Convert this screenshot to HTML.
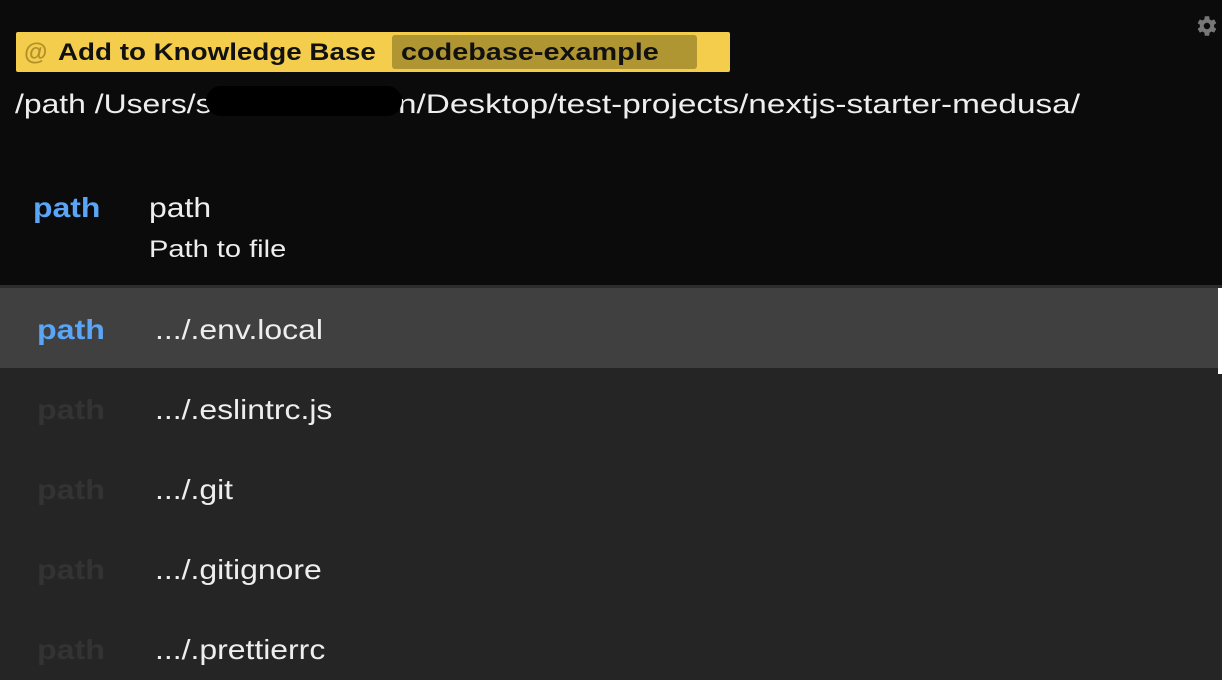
<!DOCTYPE html>
<html><head><style>
body{margin:0;width:1222px;height:680px;background:#0b0b0b;overflow:hidden;position:relative;font-family:"Liberation Sans",sans-serif;}
.a{position:absolute;white-space:nowrap;transform-origin:0 50%;}
.row{position:absolute;left:0;width:1222px;height:80px;background:#252525;}
.row .l{position:absolute;left:37px;top:26px;font-size:28px;font-weight:bold;color:#333;transform:scaleX(1.15);transform-origin:0 50%;}
.row .t{position:absolute;left:155px;top:26px;font-size:28px;color:#eee;transform:scaleX(1.14);transform-origin:0 50%;white-space:nowrap;}
</style></head><body>
<svg class="a" style="left:1193px;top:13px" width="26" height="26" viewBox="0 0 24 24"><path fill="#777" d="M19.4 13a7.5 7.5 0 0 0 0-2l2.1-1.6-2-3.5-2.5 1a7.5 7.5 0 0 0-1.7-1L14.9 3h-4l-.4 2.9a7.5 7.5 0 0 0-1.7 1l-2.5-1-2 3.5L6.4 11a7.5 7.5 0 0 0 0 2l-2.1 1.6 2 3.5 2.5-1a7.5 7.5 0 0 0 1.7 1l.4 2.9h4l.4-2.9a7.5 7.5 0 0 0 1.7-1l2.5 1 2-3.5zM12.9 15a3 3 0 1 1 0-6 3 3 0 0 1 0 6z"/></svg>
<div class="a" style="left:16px;top:32px;width:714px;height:40px;background:#f3cd4b;border-radius:2px"></div>
<div class="a" style="left:392px;top:35px;width:305px;height:34px;background:#b09632;border-radius:3px"></div>
<div class="a" style="left:24px;top:39px;font-size:24px;font-weight:bold;color:#b28f2a">@</div>
<div class="a" style="left:58px;top:39px;font-size:24px;font-weight:bold;color:#111;transform:scaleX(1.157)">Add to Knowledge Base</div>
<div class="a" style="left:401px;top:39px;font-size:24px;font-weight:bold;color:#111;transform:scaleX(1.2)">codebase-example</div>
<div class="a" style="left:15px;top:89px;font-size:27px;color:#eee;transform:scaleX(1.18)">/path /Users/s</div>
<div class="a" style="left:398px;top:89px;font-size:27px;color:#eee;transform:scaleX(1.235)">n/Desktop/test-projects/nextjs-starter-medusa/</div>
<div class="a" style="left:206px;top:86px;width:196px;height:30px;background:#000;border-radius:15px"></div>
<div class="a" style="left:33px;top:192px;font-size:28px;font-weight:bold;color:#5aa5f5;transform:scaleX(1.14)">path</div>
<div class="a" style="left:149px;top:192px;font-size:28px;color:#eee;transform:scaleX(1.14)">path</div>
<div class="a" style="left:149px;top:236px;font-size:24px;color:#eee;transform:scaleX(1.21)">Path to file</div>
<div class="a" style="left:0;top:285px;width:1222px;height:3px;background:#2c2c2c"></div>
<div class="row" style="top:288px;background:#404040"><span class="l" style="color:#5aa5f5">path</span><span class="t">.../.env.local</span></div>
<div class="row" style="top:368px"><span class="l">path</span><span class="t">.../.eslintrc.js</span></div>
<div class="row" style="top:448px"><span class="l">path</span><span class="t">.../.git</span></div>
<div class="row" style="top:528px"><span class="l">path</span><span class="t">.../.gitignore</span></div>
<div class="row" style="top:608px;height:72px"><span class="l">path</span><span class="t">.../.prettierrc</span></div>
<div class="a" style="left:1218px;top:288px;width:4px;height:86px;background:#fff"></div>
</body></html>
